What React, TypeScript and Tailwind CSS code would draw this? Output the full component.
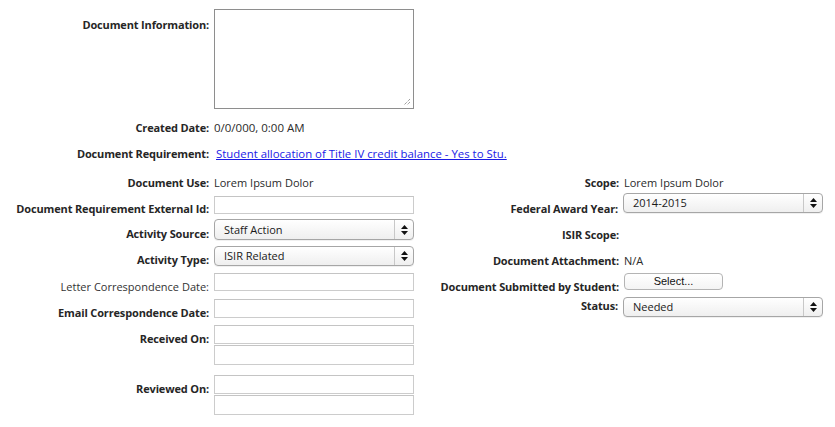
import type { ReactNode } from "react";

function Label({ children, pt, bold = true, w }: { children: ReactNode; pt: string; bold?: boolean; w: string }) {
  return (
    <div
      className={`${w} shrink-0 pr-[5px] text-right leading-4 ${pt} ${
        bold ? "font-bold tracking-[-0.15px] text-[#262626]" : "text-[#333]"
      }`}
    >
      {children}
    </div>
  );
}

function TextInput({ h = "h-[19px]" }: { h?: string }) {
  return <div className={`w-[200px] ${h} border border-[#cccccc] border-t-[#c4c4c4] bg-white`} />;
}

function Select({ value, h = "h-[21px]" }: { value: string; h?: string }) {
  return (
    <div className={`flex w-[200px] ${h} items-center rounded-[4px] border border-[#a6a6a6] bg-gradient-to-b from-white to-[#efefef] shadow-[0_1px_0_rgba(0,0,0,0.06)]`}>
      <span className="flex-1 pl-[9px] leading-4 text-[#1a1a1a]">{value}</span>
      <span className="flex h-full w-[19px] flex-col items-center justify-center gap-[2px] border-l border-[#c8c8c8]">
        <svg width="7" height="4" viewBox="0 0 7 4" aria-hidden>
          <path d="M0 4 L3.5 0 L7 4 Z" fill="#111" />
        </svg>
        <svg width="7" height="4" viewBox="0 0 7 4" aria-hidden>
          <path d="M0 0 L3.5 4 L7 0 Z" fill="#111" />
        </svg>
      </span>
    </div>
  );
}

export default function App() {
  return (
    <div className="h-[427px] w-[835px] bg-white pt-[9px] font-['Open_Sans',sans-serif] text-[11px] text-[#2a2a2a]">
      {/* full width rows */}
      <div className="flex">
        <Label w="w-[214px]" pt="pt-[8px]">Document Information:</Label>
        <div className="relative h-[100px] w-[200px] border border-[#8e8e8e] bg-white">
          <svg className="absolute bottom-[2px] right-[2px]" width="8" height="8" viewBox="0 0 8 8" aria-hidden>
            <path d="M7 1 L1 7 M7 4 L4 7" stroke="#777" strokeWidth="1" strokeDasharray="1 1" />
          </svg>
        </div>
      </div>
      <div className="mt-[11px] flex">
        <Label w="w-[214px]" pt="pt-0">Created Date:</Label>
        <span className="text-[11.5px] leading-4">0/0/000, 0:00 AM</span>
      </div>
      <div className="mt-[10px] flex">
        <Label w="w-[214px]" pt="pt-0">Document Requirement:</Label>
        <a href="#" className="pl-[2px] text-[11.4px] leading-4 text-[#1a1ae6] underline">
          Student allocation of Title IV credit balance - Yes to Stu.
        </a>
      </div>

      {/* two columns */}
      <div className="mt-[13px] flex">
        <div className="flex w-[414px] flex-col">
          <div className="flex">
            <Label w="w-[214px]" pt="pt-0">Document Use:</Label>
            <span className="leading-4">Lorem Ipsum Dolor</span>
          </div>
          <div className="mt-[5px] flex h-[18px]">
            <Label w="w-[214px]" pt="pt-[5px]">Document Requirement External Id:</Label>
            <TextInput h="h-[18px]" />
          </div>
          <div className="mt-[5px] flex h-[21px]">
            <Label w="w-[214px]" pt="pt-[7px]">Activity Source:</Label>
            <Select value="Staff Action" />
          </div>
          <div className="mt-[6px] flex h-[20px]">
            <Label w="w-[214px]" pt="pt-[6px]">Activity Type:</Label>
            <Select value="ISIR Related" h="h-[20px]" />
          </div>
          <div className="mt-[7px] flex h-[18px]">
            <Label w="w-[214px]" pt="pt-[6px]" bold={false}>Letter Correspondence Date:</Label>
            <TextInput h="h-[18px]" />
          </div>
          <div className="mt-[8px] flex h-[19px]">
            <Label w="w-[214px]" pt="pt-[6px]">Email Correspondence Date:</Label>
            <TextInput />
          </div>
          <div className="mt-[7px] flex">
            <Label w="w-[214px]" pt="pt-[6px]">Received On:</Label>
            <div className="flex flex-col gap-px">
              <TextInput />
              <TextInput h="h-[20px]" />
            </div>
          </div>
          <div className="mt-[10px] flex">
            <Label w="w-[214px]" pt="pt-[6px]">Reviewed On:</Label>
            <div className="flex flex-col gap-px">
              <TextInput />
              <TextInput h="h-[20px]" />
            </div>
          </div>
        </div>

        <div className="flex flex-col">
          <div className="flex">
            <Label w="w-[210px]" pt="pt-0">Scope:</Label>
            <span className="leading-4">Lorem Ipsum Dolor</span>
          </div>
          <div className="mt-[2px] flex h-[20px]">
            <Label w="w-[209px]" pt="pt-[8px]">Federal Award Year:</Label>
            <Select value="2014-2015" h="h-[20px]" />
          </div>
          <div className="mt-[14px] flex">
            <Label w="w-[210px]" pt="pt-0">ISIR Scope:</Label>
          </div>
          <div className="mt-[10px] flex">
            <Label w="w-[210px]" pt="pt-0">Document Attachment:</Label>
            <span className="leading-4">N/A</span>
          </div>
          <div className="mt-[4px] flex h-[17px]">
            <Label w="w-[210px]" pt="pt-[6px]">Document Submitted by Student:</Label>
            <button className="h-[17px] w-[99px] rounded-[4px] border border-[#b4b4b4] bg-gradient-to-b from-white to-[#f4f4f4] font-['Liberation_Sans',sans-serif] text-[11px] leading-none text-[#111]">
              Select...
            </button>
          </div>
          <div className="mt-[7px] flex h-[20px]">
            <Label w="w-[209px]" pt="pt-[1px]">Status:</Label>
            <Select value="Needed" h="h-[20px]" />
          </div>
        </div>
      </div>
    </div>
  );
}
